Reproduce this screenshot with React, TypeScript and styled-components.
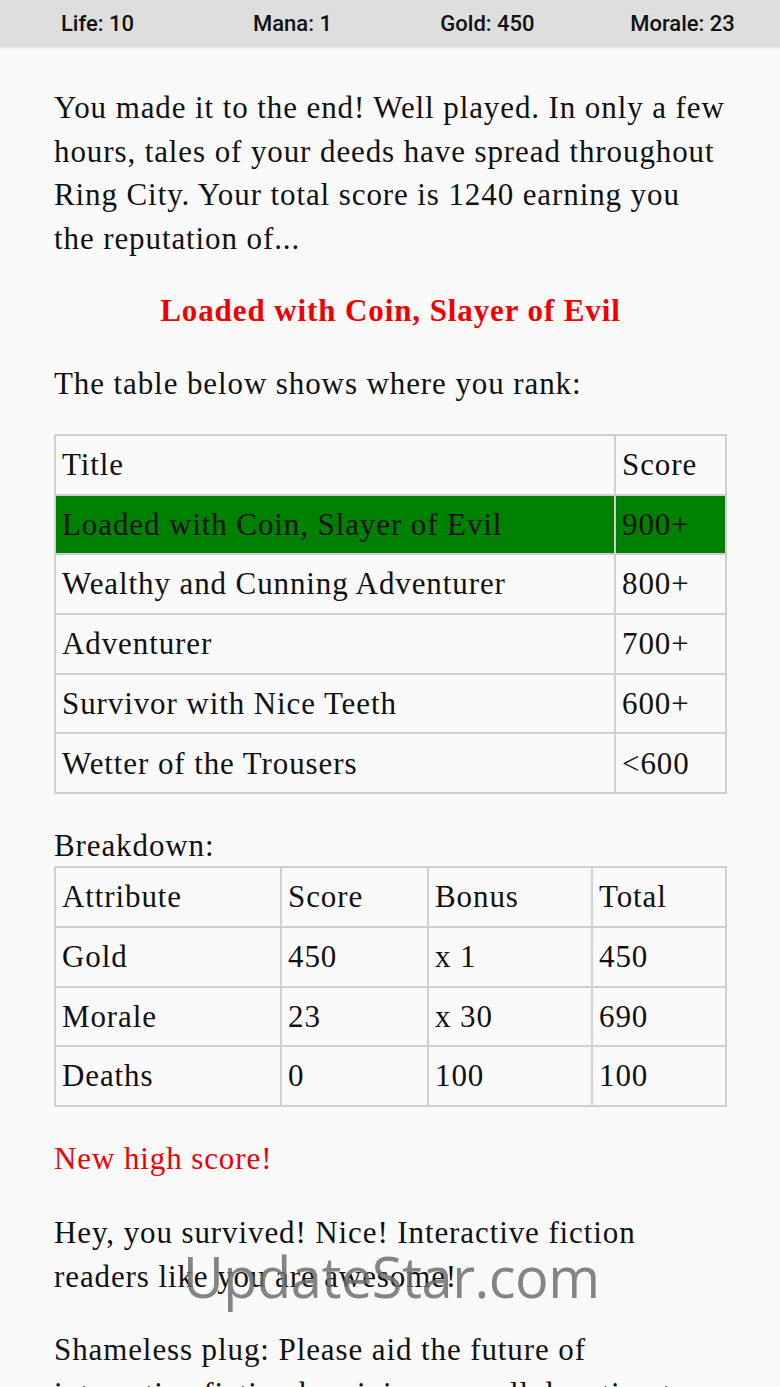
import React from "react";
import styled, { createGlobalStyle } from "styled-components";

const Global = createGlobalStyle`
  html, body { margin: 0; padding: 0; background: #fafafa; }
  body { font-family: "Liberation Serif", "DejaVu Serif", serif; color: #111; }
`;

const Page = styled.div`
  position: relative;
  width: 780px;
  min-height: 1387px;
  background: #fafafa;
`;

const StatBar = styled.div`
  display: grid;
  grid-template-columns: repeat(4, 1fr);
  align-items: center;
  height: 47px;
  background: #dedede;
  border-bottom: 1px solid #e9e9e9;
  box-shadow: 0 1px 1px rgba(0,0,0,0.04);
`;

const Stat = styled.div`
  text-align: center;
  font-family: Roboto, "Liberation Sans", sans-serif;
  font-weight: 500;
  font-size: 22px;
  color: #111;
`;

const Content = styled.main`
  padding: 38px 53px 0 54px;
  font-size: 31px;
  line-height: 43.5px;
  letter-spacing: 0.9px;
`;

const Para = styled.p<{ $mb?: number }>`
  margin: 0 0 ${(p) => p.$mb ?? 29}px 0;
`;

const Reputation = styled.p`
  margin: 0 0 29px 0;
  text-align: center;
  color: #f00000;
  font-weight: bold;
`;

const RedNote = styled.p`
  margin: 0 0 31px 0;
  color: #f00000;
`;

const Label = styled.div`
  margin: 0;
  line-height: 40px;
`;

const Table = styled.table<{ $mb?: number }>`
  width: 100%;
  table-layout: fixed;
  border-collapse: collapse;
  border: 2px solid #d0d0d0;
  margin: 0 0 ${(p) => p.$mb ?? 30}px 0;
`;

const Col = styled.col<{ $w?: number }>`
  width: ${(p) => (p.$w ? `${p.$w}px` : "auto")};
`;

const Row = styled.tr<{ $hl?: boolean }>`
  background: ${(p) => (p.$hl ? "#008000" : "transparent")};
`;

const Cell = styled.td`
  border: 2px solid #d0d0d0;
  height: 57.7px;
  padding: 0 5px 0 6px;
  vertical-align: middle;
  white-space: nowrap;
`;

const Watermark = styled.div`
  position: absolute;
  left: 183px;
  top: 1248px;
  font-family: "Open Sans", "Liberation Sans", sans-serif;
  font-size: 56px;
  line-height: 1;
  color: rgba(110, 110, 110, 0.85);
  letter-spacing: -0.5px;
  pointer-events: none;
`;

const ranks: [string, string][] = [
  ["Loaded with Coin, Slayer of Evil", "900+"],
  ["Wealthy and Cunning Adventurer", "800+"],
  ["Adventurer", "700+"],
  ["Survivor with Nice Teeth", "600+"],
  ["Wetter of the Trousers", "<600"],
];

const breakdown: [string, string, string, string][] = [
  ["Gold", "450", "x 1", "450"],
  ["Morale", "23", "x 30", "690"],
  ["Deaths", "0", "100", "100"],
];

export default function App() {
  return (
    <Page>
      <Global />
      <StatBar>
        <Stat>Life: 10</Stat>
        <Stat>Mana: 1</Stat>
        <Stat>Gold: 450</Stat>
        <Stat>Morale: 23</Stat>
      </StatBar>
      <Content>
        <Para>
          You made it to the end! Well played. In only a few hours, tales of your deeds have
          spread throughout Ring City. Your total score is 1240 earning you the reputation of...
        </Para>
        <Reputation>Loaded with Coin, Slayer of Evil</Reputation>
        <Para>The table below shows where you rank:</Para>
        <Table $mb={32}>
          <colgroup>
            <Col />
            <Col $w={111} />
          </colgroup>
          <tbody>
            <Row>
              <Cell>Title</Cell>
              <Cell>Score</Cell>
            </Row>
            {ranks.map(([t, s], i) => (
              <Row key={t} $hl={i === 0}>
                <Cell>{t}</Cell>
                <Cell>{s}</Cell>
              </Row>
            ))}
          </tbody>
        </Table>
        <Label>Breakdown:</Label>
        <Table $mb={30}>
          <colgroup>
            <Col $w={226} />
            <Col $w={147} />
            <Col $w={164} />
            <Col />
          </colgroup>
          <tbody>
            <Row>
              <Cell>Attribute</Cell>
              <Cell>Score</Cell>
              <Cell>Bonus</Cell>
              <Cell>Total</Cell>
            </Row>
            {breakdown.map((r) => (
              <Row key={r[0]}>
                {r.map((c, j) => (
                  <Cell key={j}>{c}</Cell>
                ))}
              </Row>
            ))}
          </tbody>
        </Table>
        <RedNote>New high score!</RedNote>
        <Para $mb={30}>Hey, you survived! Nice! Interactive fiction readers like you are awesome!</Para>
        <Para>
          Shameless plug: Please aid the future of interactive fiction by giving a small donation
          to support the author.
        </Para>
      </Content>
      <Watermark>UpdateStar.com</Watermark>
    </Page>
  );
}
